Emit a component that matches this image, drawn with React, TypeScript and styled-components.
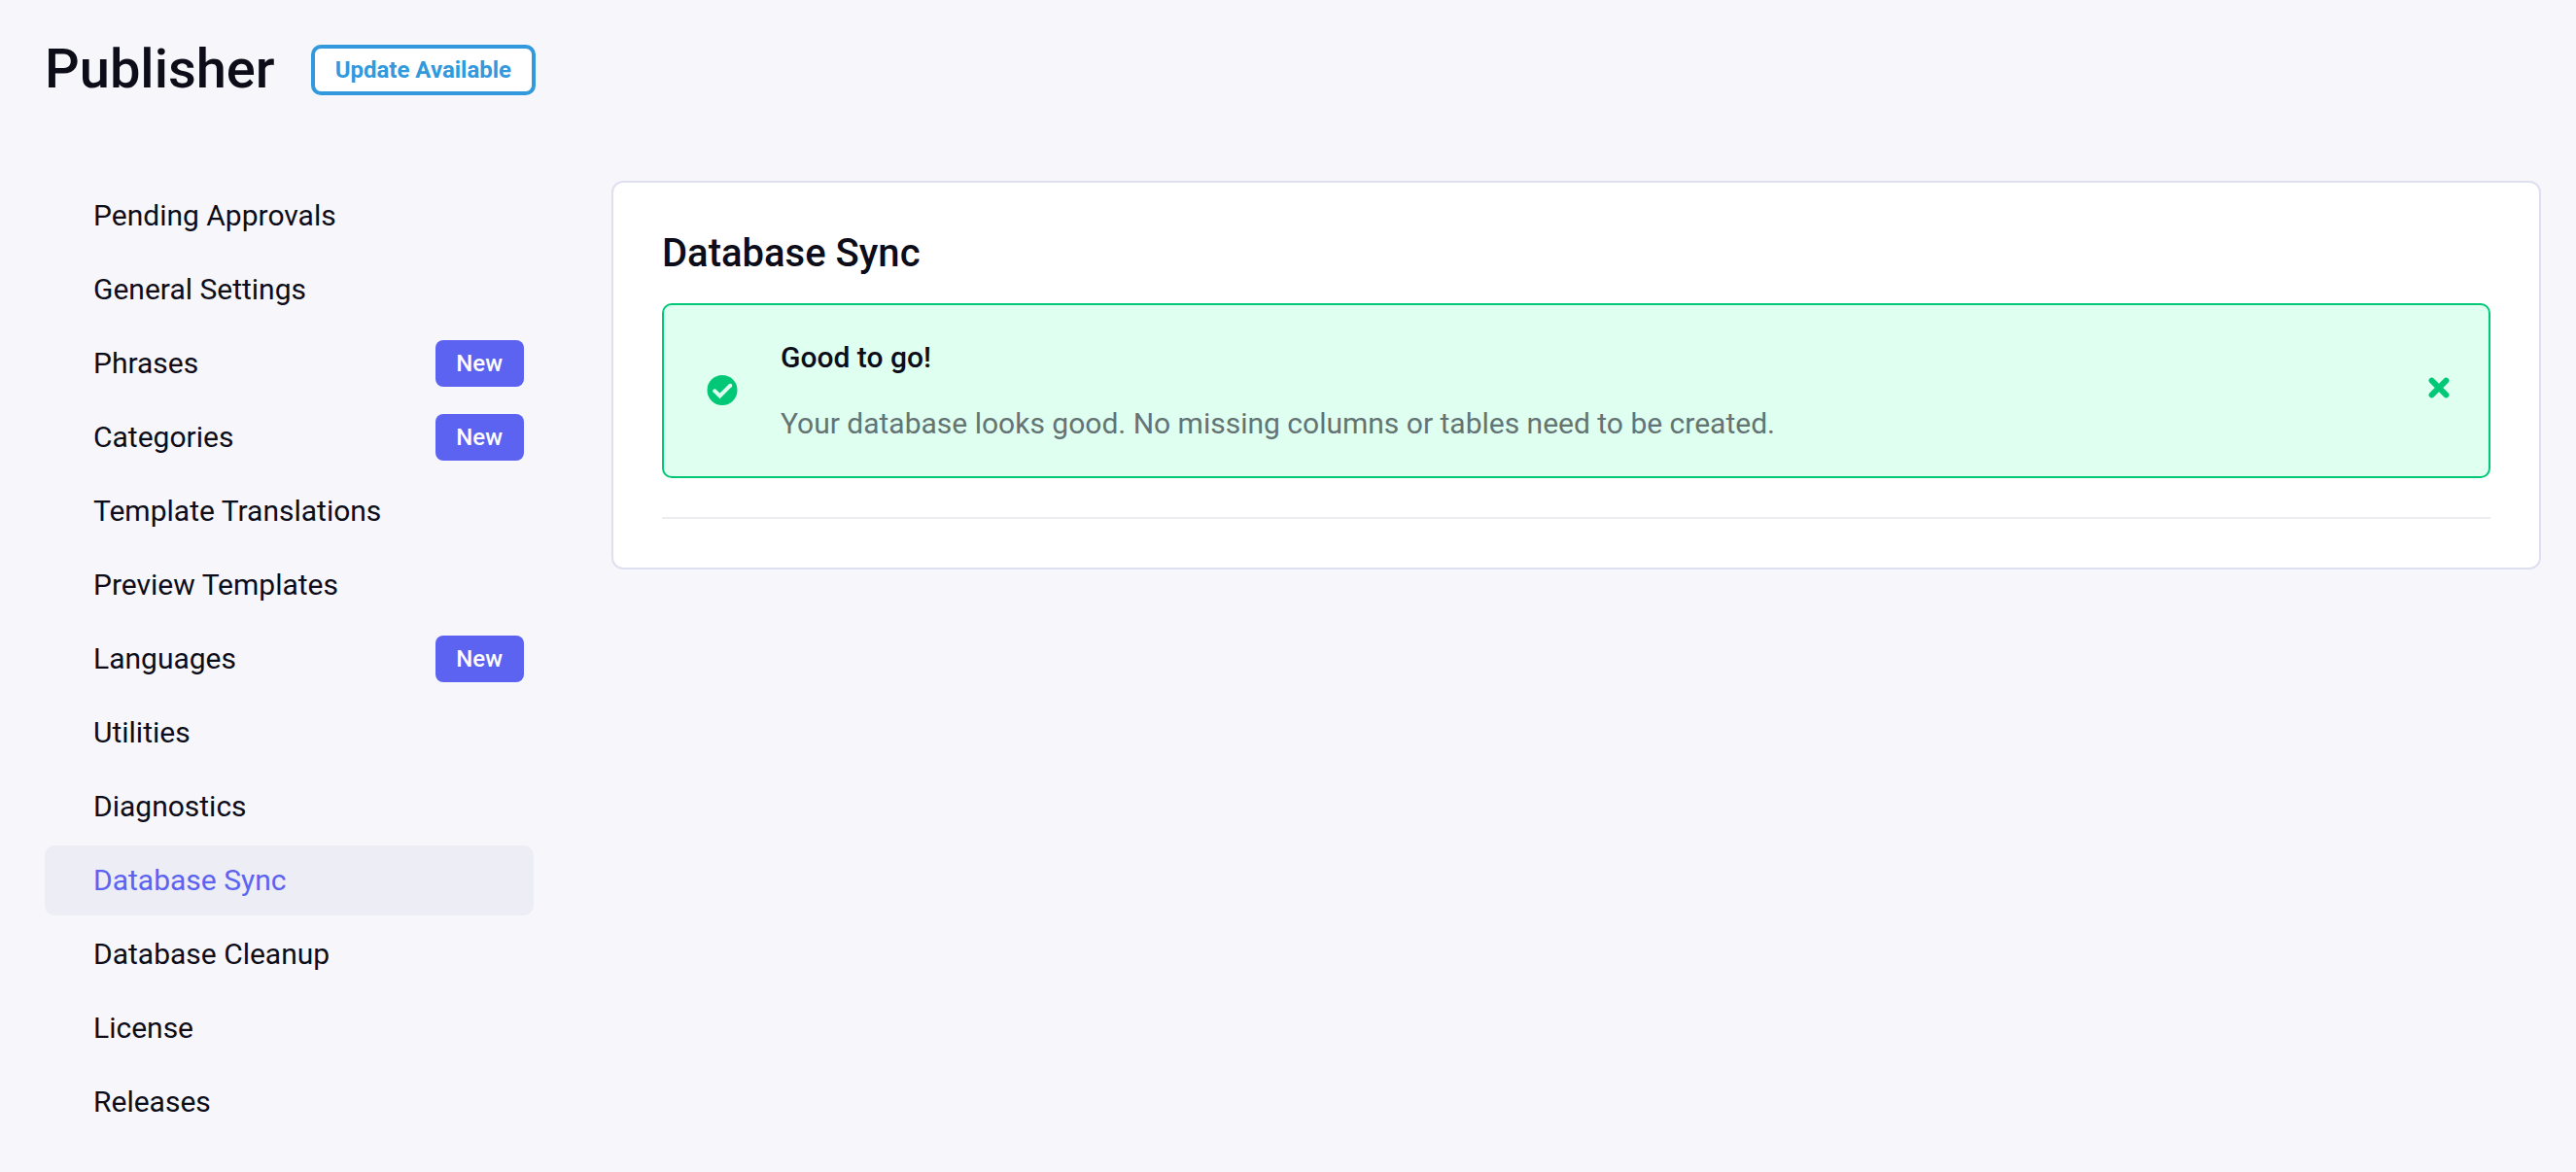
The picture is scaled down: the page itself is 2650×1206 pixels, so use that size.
import React from "react";
import styled, { createGlobalStyle } from "styled-components";

const GlobalStyle = createGlobalStyle`
  * { box-sizing: border-box; }
  body {
    margin: 0;
    background: #f7f7fb;
    color: #0d0d19;
    font-family: Roboto, "Liberation Sans", sans-serif;
    font-size: 30px;
    line-height: 48px;
  }
`;

const Page = styled.div`
  padding: 46px 36px 36px 46px;
`;

const Header = styled.header`
  display: flex;
  align-items: flex-start;
  gap: 37px;
  margin-bottom: 88px;
`;

const PageTitle = styled.h1`
  margin: 0;
  font-size: 56px;
  font-weight: 500;
  line-height: 50px;
`;

const UpdateButton = styled.button`
  height: 52px;
  padding: 0 21px;
  border: 4px solid #3399dd;
  border-radius: 10px;
  background: #ffffff;
  color: #3399dd;
  font-family: inherit;
  font-size: 24px;
  font-weight: 700;
  line-height: 44px;
  cursor: pointer;
`;

const Columns = styled.div`
  display: grid;
  grid-template-columns: 503px minmax(0, 1fr);
  align-items: start;
  gap: 80px;
`;

const NavList = styled.ul`
  display: flex;
  flex-direction: column;
  gap: 4px;
  margin: 0;
  padding: 0;
  list-style: none;
`;

const NavLink = styled.a<{ $active: boolean }>`
  display: flex;
  align-items: center;
  justify-content: space-between;
  height: 72px;
  padding: 0 10px 0 50px;
  border-radius: 10px;
  background: ${(p) => (p.$active ? "#ecedf5" : "transparent")};
  color: ${(p) => (p.$active ? "#5d63f1" : "inherit")};
  text-decoration: none;
`;

const Badge = styled.span`
  padding: 0 22px 0 21px;
  border-radius: 8px;
  background: #5d63f1;
  color: #ffffff;
  font-size: 24px;
  font-weight: 500;
`;

const Card = styled.main`
  padding: 50px;
  border: 2px solid #dfe0ef;
  border-radius: 12px;
  background: #ffffff;
`;

const CardTitle = styled.h2`
  margin: 0 0 28px;
  font-size: 40px;
  font-weight: 500;
  line-height: 46px;
`;

const Alert = styled.div`
  display: flex;
  align-items: center;
  padding: 30px 40px 30px 44px;
  border: 2px solid #01c877;
  border-radius: 10px;
  background: #dffff0;
  color: #01c877;
`;

const AlertBody = styled.div`
  flex: 1;
  display: flex;
  flex-direction: column;
  gap: 20px;
  margin-left: 44px;
`;

const AlertTitle = styled.p`
  margin: 0;
  color: #0d0d19;
  font-weight: 500;
`;

const AlertText = styled.p`
  margin: 0;
  color: #647474;
`;

const CloseButton = styled.button`
  display: flex;
  padding: 0 0 6px;
  border: 0;
  background: none;
  color: inherit;
  cursor: pointer;
`;

const Divider = styled.hr`
  height: 2px;
  margin: 40px 0 0;
  border: 0;
  background: #ebecef;
`;

const CheckIcon = () => (
  <svg width="32" height="32" viewBox="0 0 32 32" aria-hidden="true">
    <circle cx="16" cy="15.5" r="15.5" fill="currentColor" />
    <path d="M8.2 16.2 13.5 21.5 24.3 10.7" fill="none" stroke="#dffff0" strokeWidth="4" />
    <circle cx="8.2" cy="16.2" r="2" fill="#dffff0" />
    <circle cx="24.3" cy="10.7" r="2" fill="#dffff0" />
  </svg>
);

const CloseIcon = () => (
  <svg width="22" height="22" viewBox="0 0 22 22" aria-hidden="true">
    <path
      d="M3.6 3.6 18.4 18.4M18.4 3.6 3.6 18.4"
      fill="none"
      stroke="currentColor"
      strokeWidth="6"
      strokeLinecap="round"
    />
  </svg>
);

const navItems = [
  { label: "Pending Approvals" },
  { label: "General Settings" },
  { label: "Phrases", isNew: true },
  { label: "Categories", isNew: true },
  { label: "Template Translations" },
  { label: "Preview Templates" },
  { label: "Languages", isNew: true },
  { label: "Utilities" },
  { label: "Diagnostics" },
  { label: "Database Sync", active: true },
  { label: "Database Cleanup" },
  { label: "License" },
  { label: "Releases" },
];

export default function App() {
  return (
    <>
      <GlobalStyle />
      <Page>
        <Header>
          <PageTitle>Publisher</PageTitle>
          <UpdateButton type="button">Update Available</UpdateButton>
        </Header>
        <Columns>
          <nav aria-label="Publisher">
            <NavList>
              {navItems.map((item) => (
                <li key={item.label}>
                  <NavLink
                    href="#"
                    $active={!!item.active}
                    aria-current={item.active ? "page" : undefined}
                  >
                    {item.label}
                    {item.isNew && <Badge>New</Badge>}
                  </NavLink>
                </li>
              ))}
            </NavList>
          </nav>
          <Card>
            <CardTitle>Database Sync</CardTitle>
            <Alert role="status">
              <CheckIcon />
              <AlertBody>
                <AlertTitle>Good to go!</AlertTitle>
                <AlertText>
                  Your database looks good. No missing columns or tables need to be created.
                </AlertText>
              </AlertBody>
              <CloseButton type="button" aria-label="Close">
                <CloseIcon />
              </CloseButton>
            </Alert>
            <Divider />
          </Card>
        </Columns>
      </Page>
    </>
  );
}
